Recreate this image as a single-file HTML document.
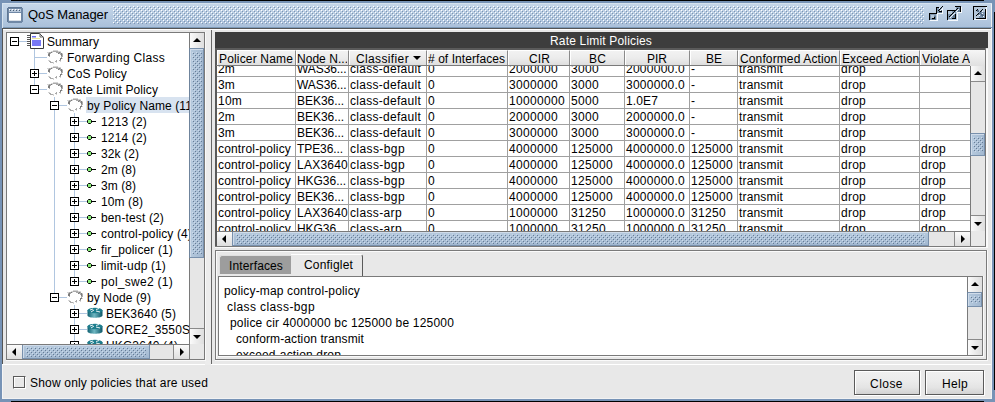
<!DOCTYPE html><html><head><meta charset="utf-8"><style>
html,body{margin:0;padding:0;width:995px;height:402px;overflow:hidden;position:relative;font-family:"Liberation Sans",sans-serif;}
body div{position:absolute;}
.t{white-space:pre;}
</style></head><body><div style="left:0px;top:0px;width:995px;height:402px;background:#7793b6"></div>
<div style="left:11px;top:0px;width:973px;height:1px;background:#000"></div>
<div style="left:994px;top:12px;width:1px;height:378px;background:#000"></div>
<div style="left:11px;top:401px;width:973px;height:1px;background:#000"></div>
<div style="left:2px;top:3px;width:990px;height:396px;background:#f2f2f2"></div>
<div style="left:2px;top:3px;width:990px;height:1px;background:#d6e3ef"></div>
<div style="left:2px;top:3px;width:1px;height:25px;background:#d6e3ef"></div>
<div style="left:3px;top:4px;width:988px;height:23px;background:linear-gradient(#c6d7ea,#b8cce2 50%,#aac0da)"></div>
<div style="left:3px;top:27px;width:989px;height:1px;background:#7d9ab8"></div>
<div style="left:3px;top:28px;width:988px;height:370px;background:#e8e8e8"></div>
<div style="left:2px;top:28px;width:990px;height:1px;background:#555"></div>
<div style="left:2px;top:28px;width:1px;height:336px;background:#555"></div>
<div style="left:3px;top:29px;width:988px;height:1px;background:#fff"></div>
<div style="left:2px;top:364px;width:990px;height:1px;background:#fff"></div>
<div style="left:2px;top:365px;width:1px;height:33px;background:#f4f4f4"></div>
<div style="left:991px;top:28px;width:1px;height:337px;background:#f4f4f4"></div>
<svg style="position:absolute;left:7px;top:7px" width="16" height="16" shape-rendering="crispEdges"><rect x="1" y="0" width="14" height="1" fill="#5f7794"/><rect x="0" y="1" width="1" height="1" fill="#5f7794"/><rect x="1" y="1" width="15" height="1" fill="#7088a6"/><rect x="0" y="2" width="1" height="1" fill="#5f7794"/><rect x="1" y="2" width="1" height="1" fill="#7088a6"/><rect x="2" y="2" width="1" height="1" fill="#ffffff"/><rect x="3" y="2" width="2" height="1" fill="#b9c8da"/><rect x="5" y="2" width="1" height="1" fill="#ffffff"/><rect x="6" y="2" width="2" height="1" fill="#b9c8da"/><rect x="8" y="2" width="1" height="1" fill="#ffffff"/><rect x="9" y="2" width="2" height="1" fill="#b9c8da"/><rect x="11" y="2" width="1" height="1" fill="#ffffff"/><rect x="12" y="2" width="2" height="1" fill="#b9c8da"/><rect x="14" y="2" width="2" height="1" fill="#7088a6"/><rect x="0" y="3" width="1" height="1" fill="#5f7794"/><rect x="1" y="3" width="1" height="1" fill="#7088a6"/><rect x="2" y="3" width="1" height="1" fill="#b9c8da"/><rect x="3" y="3" width="1" height="1" fill="#4a5f78"/><rect x="4" y="3" width="2" height="1" fill="#b9c8da"/><rect x="6" y="3" width="1" height="1" fill="#4a5f78"/><rect x="7" y="3" width="2" height="1" fill="#b9c8da"/><rect x="9" y="3" width="1" height="1" fill="#4a5f78"/><rect x="10" y="3" width="2" height="1" fill="#b9c8da"/><rect x="12" y="3" width="1" height="1" fill="#4a5f78"/><rect x="13" y="3" width="1" height="1" fill="#b9c8da"/><rect x="14" y="3" width="2" height="1" fill="#7088a6"/><rect x="0" y="4" width="1" height="1" fill="#5f7794"/><rect x="1" y="4" width="1" height="1" fill="#7088a6"/><rect x="2" y="4" width="12" height="1" fill="#b9c8da"/><rect x="14" y="4" width="2" height="1" fill="#7088a6"/><rect x="0" y="5" width="1" height="1" fill="#5f7794"/><rect x="1" y="5" width="15" height="1" fill="#7088a6"/><rect x="0" y="6" width="1" height="1" fill="#5f7794"/><rect x="1" y="6" width="1" height="1" fill="#7088a6"/><rect x="2" y="6" width="12" height="1" fill="#ffffff"/><rect x="14" y="6" width="2" height="1" fill="#7088a6"/><rect x="0" y="7" width="1" height="1" fill="#5f7794"/><rect x="1" y="7" width="1" height="1" fill="#7088a6"/><rect x="2" y="7" width="12" height="1" fill="#ffffff"/><rect x="14" y="7" width="2" height="1" fill="#7088a6"/><rect x="0" y="8" width="1" height="1" fill="#5f7794"/><rect x="1" y="8" width="1" height="1" fill="#7088a6"/><rect x="2" y="8" width="12" height="1" fill="#ffffff"/><rect x="14" y="8" width="2" height="1" fill="#7088a6"/><rect x="0" y="9" width="1" height="1" fill="#5f7794"/><rect x="1" y="9" width="1" height="1" fill="#7088a6"/><rect x="2" y="9" width="12" height="1" fill="#ffffff"/><rect x="14" y="9" width="2" height="1" fill="#7088a6"/><rect x="0" y="10" width="1" height="1" fill="#5f7794"/><rect x="1" y="10" width="1" height="1" fill="#7088a6"/><rect x="2" y="10" width="12" height="1" fill="#ffffff"/><rect x="14" y="10" width="2" height="1" fill="#7088a6"/><rect x="0" y="11" width="1" height="1" fill="#5f7794"/><rect x="1" y="11" width="1" height="1" fill="#7088a6"/><rect x="2" y="11" width="12" height="1" fill="#ffffff"/><rect x="14" y="11" width="2" height="1" fill="#7088a6"/><rect x="0" y="12" width="1" height="1" fill="#5f7794"/><rect x="1" y="12" width="1" height="1" fill="#7088a6"/><rect x="2" y="12" width="12" height="1" fill="#ffffff"/><rect x="14" y="12" width="2" height="1" fill="#7088a6"/><rect x="0" y="13" width="1" height="1" fill="#5f7794"/><rect x="1" y="13" width="1" height="1" fill="#7088a6"/><rect x="2" y="13" width="12" height="1" fill="#d8dee6"/><rect x="14" y="13" width="2" height="1" fill="#7088a6"/><rect x="0" y="14" width="1" height="1" fill="#5f7794"/><rect x="1" y="14" width="15" height="1" fill="#7088a6"/><rect x="1" y="15" width="14" height="1" fill="#7088a6"/></svg>
<div class="t" style="left:28px;top:6px;font-size:13px;line-height:17px;letter-spacing:-0.085px;color:#000;">QoS Manager</div>
<svg style="position:absolute;left:113px;top:6px" width="811" height="18"><defs><pattern id="p18" x="0" y="0" width="4" height="4" patternUnits="userSpaceOnUse"><rect x="0" y="0" width="1" height="1" fill="#ffffff"/><rect x="1" y="1" width="1" height="1" fill="#7d95b2"/><rect x="2" y="2" width="1" height="1" fill="#ffffff"/><rect x="3" y="3" width="1" height="1" fill="#7d95b2"/></pattern></defs><rect width="811" height="18" fill="url(#p18)"/></svg>
<svg style="position:absolute;left:927px;top:4px" width="18" height="18" shape-rendering="crispEdges"><rect x="15" y="2" width="1" height="1" fill="#000000"/><rect x="9" y="3" width="3" height="1" fill="#000000"/><rect x="14" y="3" width="1" height="1" fill="#000000"/><rect x="9" y="4" width="1" height="1" fill="#000000"/><rect x="10" y="4" width="2" height="1" fill="#7e96b0"/><rect x="12" y="4" width="1" height="1" fill="#f4f8fc"/><rect x="13" y="4" width="1" height="1" fill="#000000"/><rect x="14" y="4" width="1" height="1" fill="#7e96b0"/><rect x="15" y="4" width="1" height="1" fill="#f4f8fc"/><rect x="9" y="5" width="1" height="1" fill="#000000"/><rect x="10" y="5" width="2" height="1" fill="#7e96b0"/><rect x="12" y="5" width="1" height="1" fill="#000000"/><rect x="13" y="5" width="1" height="1" fill="#7e96b0"/><rect x="14" y="5" width="2" height="1" fill="#f4f8fc"/><rect x="9" y="6" width="1" height="1" fill="#000000"/><rect x="10" y="6" width="1" height="1" fill="#7e96b0"/><rect x="11" y="6" width="1" height="1" fill="#000000"/><rect x="12" y="6" width="1" height="1" fill="#5f7790"/><rect x="13" y="6" width="1" height="1" fill="#f4f8fc"/><rect x="14" y="6" width="1" height="1" fill="#5f7790"/><rect x="15" y="6" width="1" height="1" fill="#f4f8fc"/><rect x="9" y="7" width="1" height="1" fill="#000000"/><rect x="10" y="7" width="2" height="1" fill="#7e96b0"/><rect x="12" y="7" width="3" height="1" fill="#000000"/><rect x="15" y="7" width="1" height="1" fill="#f4f8fc"/><rect x="9" y="8" width="1" height="1" fill="#000000"/><rect x="10" y="8" width="2" height="1" fill="#7e96b0"/><rect x="12" y="8" width="3" height="1" fill="#5f7790"/><rect x="15" y="8" width="1" height="1" fill="#f4f8fc"/><rect x="2" y="9" width="8" height="1" fill="#000000"/><rect x="10" y="9" width="6" height="1" fill="#f4f8fc"/><rect x="2" y="10" width="1" height="1" fill="#000000"/><rect x="3" y="10" width="6" height="1" fill="#7e96b0"/><rect x="10" y="10" width="1" height="1" fill="#f4f8fc"/><rect x="2" y="11" width="1" height="1" fill="#000000"/><rect x="3" y="11" width="1" height="1" fill="#7e96b0"/><rect x="4" y="11" width="3" height="1" fill="#b4c6d8"/><rect x="7" y="11" width="2" height="1" fill="#7e96b0"/><rect x="10" y="11" width="1" height="1" fill="#f4f8fc"/><rect x="2" y="12" width="1" height="1" fill="#000000"/><rect x="3" y="12" width="1" height="1" fill="#7e96b0"/><rect x="4" y="12" width="3" height="1" fill="#b4c6d8"/><rect x="7" y="12" width="2" height="1" fill="#5f7790"/><rect x="10" y="12" width="1" height="1" fill="#f4f8fc"/><rect x="2" y="13" width="1" height="1" fill="#000000"/><rect x="3" y="13" width="1" height="1" fill="#7e96b0"/><rect x="4" y="13" width="3" height="1" fill="#b4c6d8"/><rect x="7" y="13" width="1" height="1" fill="#000000"/><rect x="8" y="13" width="1" height="1" fill="#5f7790"/><rect x="10" y="13" width="1" height="1" fill="#f4f8fc"/><rect x="2" y="14" width="1" height="1" fill="#000000"/><rect x="3" y="14" width="2" height="1" fill="#7e96b0"/><rect x="5" y="14" width="3" height="1" fill="#000000"/><rect x="8" y="14" width="1" height="1" fill="#5f7790"/><rect x="10" y="14" width="1" height="1" fill="#f4f8fc"/><rect x="2" y="15" width="1" height="1" fill="#000000"/><rect x="3" y="15" width="2" height="1" fill="#7e96b0"/><rect x="5" y="15" width="4" height="1" fill="#5f7790"/><rect x="10" y="15" width="1" height="1" fill="#f4f8fc"/><rect x="3" y="16" width="8" height="1" fill="#f4f8fc"/></svg>
<svg style="position:absolute;left:945px;top:4px" width="18" height="18" shape-rendering="crispEdges"><rect x="10" y="2" width="6" height="1" fill="#000000"/><rect x="11" y="3" width="4" height="1" fill="#7e96b0"/><rect x="15" y="3" width="1" height="1" fill="#000000"/><rect x="16" y="3" width="1" height="1" fill="#f4f8fc"/><rect x="11" y="4" width="1" height="1" fill="#7e96b0"/><rect x="12" y="4" width="1" height="1" fill="#000000"/><rect x="13" y="4" width="2" height="1" fill="#5f7790"/><rect x="15" y="4" width="1" height="1" fill="#000000"/><rect x="16" y="4" width="1" height="1" fill="#f4f8fc"/><rect x="11" y="5" width="1" height="1" fill="#000000"/><rect x="12" y="5" width="1" height="1" fill="#7e96b0"/><rect x="13" y="5" width="1" height="1" fill="#f4f8fc"/><rect x="14" y="5" width="1" height="1" fill="#5f7790"/><rect x="15" y="5" width="1" height="1" fill="#000000"/><rect x="16" y="5" width="1" height="1" fill="#f4f8fc"/><rect x="2" y="6" width="9" height="1" fill="#000000"/><rect x="11" y="6" width="1" height="1" fill="#7e96b0"/><rect x="12" y="6" width="1" height="1" fill="#f4f8fc"/><rect x="13" y="6" width="2" height="1" fill="#5f7790"/><rect x="15" y="6" width="1" height="1" fill="#000000"/><rect x="16" y="6" width="1" height="1" fill="#f4f8fc"/><rect x="2" y="7" width="1" height="1" fill="#000000"/><rect x="3" y="7" width="4" height="1" fill="#b4c6d8"/><rect x="7" y="7" width="2" height="1" fill="#7e96b0"/><rect x="9" y="7" width="1" height="1" fill="#000000"/><rect x="10" y="7" width="1" height="1" fill="#7e96b0"/><rect x="11" y="7" width="1" height="1" fill="#f4f8fc"/><rect x="12" y="7" width="1" height="1" fill="#7e96b0"/><rect x="13" y="7" width="2" height="1" fill="#5f7790"/><rect x="15" y="7" width="1" height="1" fill="#000000"/><rect x="16" y="7" width="1" height="1" fill="#f4f8fc"/><rect x="2" y="8" width="1" height="1" fill="#000000"/><rect x="3" y="8" width="4" height="1" fill="#b4c6d8"/><rect x="7" y="8" width="1" height="1" fill="#7e96b0"/><rect x="8" y="8" width="1" height="1" fill="#000000"/><rect x="9" y="8" width="2" height="1" fill="#7e96b0"/><rect x="12" y="8" width="5" height="1" fill="#f4f8fc"/><rect x="2" y="9" width="1" height="1" fill="#000000"/><rect x="3" y="9" width="4" height="1" fill="#b4c6d8"/><rect x="7" y="9" width="1" height="1" fill="#000000"/><rect x="8" y="9" width="1" height="1" fill="#7e96b0"/><rect x="9" y="9" width="1" height="1" fill="#f4f8fc"/><rect x="10" y="9" width="1" height="1" fill="#7e96b0"/><rect x="12" y="9" width="1" height="1" fill="#f4f8fc"/><rect x="2" y="10" width="1" height="1" fill="#000000"/><rect x="3" y="10" width="3" height="1" fill="#7e96b0"/><rect x="6" y="10" width="1" height="1" fill="#000000"/><rect x="7" y="10" width="1" height="1" fill="#7e96b0"/><rect x="8" y="10" width="1" height="1" fill="#f4f8fc"/><rect x="9" y="10" width="1" height="1" fill="#7e96b0"/><rect x="10" y="10" width="1" height="1" fill="#000000"/><rect x="12" y="10" width="1" height="1" fill="#f4f8fc"/><rect x="2" y="11" width="1" height="1" fill="#000000"/><rect x="3" y="11" width="2" height="1" fill="#7e96b0"/><rect x="5" y="11" width="1" height="1" fill="#000000"/><rect x="6" y="11" width="1" height="1" fill="#7e96b0"/><rect x="7" y="11" width="1" height="1" fill="#f4f8fc"/><rect x="8" y="11" width="2" height="1" fill="#5f7790"/><rect x="10" y="11" width="1" height="1" fill="#000000"/><rect x="12" y="11" width="1" height="1" fill="#f4f8fc"/><rect x="2" y="12" width="1" height="1" fill="#000000"/><rect x="3" y="12" width="1" height="1" fill="#7e96b0"/><rect x="4" y="12" width="1" height="1" fill="#000000"/><rect x="5" y="12" width="1" height="1" fill="#7e96b0"/><rect x="6" y="12" width="1" height="1" fill="#f4f8fc"/><rect x="7" y="12" width="1" height="1" fill="#7e96b0"/><rect x="8" y="12" width="2" height="1" fill="#5f7790"/><rect x="10" y="12" width="1" height="1" fill="#000000"/><rect x="12" y="12" width="1" height="1" fill="#f4f8fc"/><rect x="2" y="13" width="1" height="1" fill="#000000"/><rect x="3" y="13" width="2" height="1" fill="#7e96b0"/><rect x="5" y="13" width="1" height="1" fill="#f4f8fc"/><rect x="6" y="13" width="2" height="1" fill="#7e96b0"/><rect x="8" y="13" width="2" height="1" fill="#5f7790"/><rect x="10" y="13" width="1" height="1" fill="#000000"/><rect x="12" y="13" width="1" height="1" fill="#f4f8fc"/><rect x="2" y="14" width="1" height="1" fill="#000000"/><rect x="3" y="14" width="4" height="1" fill="#7e96b0"/><rect x="7" y="14" width="4" height="1" fill="#000000"/><rect x="12" y="14" width="1" height="1" fill="#f4f8fc"/><rect x="2" y="15" width="1" height="1" fill="#000000"/><rect x="12" y="15" width="1" height="1" fill="#f4f8fc"/><rect x="3" y="16" width="10" height="1" fill="#f4f8fc"/></svg>
<svg style="position:absolute;left:971px;top:4px" width="18" height="18" shape-rendering="crispEdges"><rect x="2" y="2" width="14" height="1" fill="#000000"/><rect x="2" y="3" width="1" height="1" fill="#000000"/><rect x="3" y="3" width="11" height="1" fill="#b4c6d8"/><rect x="15" y="3" width="1" height="1" fill="#f4f8fc"/><rect x="2" y="4" width="1" height="1" fill="#000000"/><rect x="3" y="4" width="11" height="1" fill="#b4c6d8"/><rect x="15" y="4" width="1" height="1" fill="#f4f8fc"/><rect x="2" y="5" width="1" height="1" fill="#000000"/><rect x="3" y="5" width="3" height="1" fill="#b4c6d8"/><rect x="6" y="5" width="1" height="1" fill="#000000"/><rect x="7" y="5" width="4" height="1" fill="#b4c6d8"/><rect x="11" y="5" width="1" height="1" fill="#000000"/><rect x="12" y="5" width="2" height="1" fill="#b4c6d8"/><rect x="14" y="5" width="1" height="1" fill="#000000"/><rect x="15" y="5" width="1" height="1" fill="#f4f8fc"/><rect x="2" y="6" width="1" height="1" fill="#000000"/><rect x="3" y="6" width="2" height="1" fill="#b4c6d8"/><rect x="5" y="6" width="1" height="1" fill="#000000"/><rect x="6" y="6" width="1" height="1" fill="#4f6580"/><rect x="7" y="6" width="1" height="1" fill="#5f7790"/><rect x="8" y="6" width="2" height="1" fill="#b4c6d8"/><rect x="10" y="6" width="1" height="1" fill="#000000"/><rect x="11" y="6" width="3" height="1" fill="#b4c6d8"/><rect x="14" y="6" width="1" height="1" fill="#000000"/><rect x="15" y="6" width="1" height="1" fill="#f4f8fc"/><rect x="2" y="7" width="1" height="1" fill="#000000"/><rect x="3" y="7" width="3" height="1" fill="#b4c6d8"/><rect x="6" y="7" width="1" height="1" fill="#5f7790"/><rect x="7" y="7" width="1" height="1" fill="#4f6580"/><rect x="8" y="7" width="1" height="1" fill="#b4c6d8"/><rect x="9" y="7" width="1" height="1" fill="#000000"/><rect x="10" y="7" width="1" height="1" fill="#5f7790"/><rect x="11" y="7" width="1" height="1" fill="#f4f8fc"/><rect x="12" y="7" width="2" height="1" fill="#b4c6d8"/><rect x="14" y="7" width="1" height="1" fill="#000000"/><rect x="15" y="7" width="1" height="1" fill="#f4f8fc"/><rect x="2" y="8" width="1" height="1" fill="#000000"/><rect x="3" y="8" width="5" height="1" fill="#b4c6d8"/><rect x="8" y="8" width="1" height="1" fill="#4f6580"/><rect x="9" y="8" width="1" height="1" fill="#5f7790"/><rect x="10" y="8" width="4" height="1" fill="#7e96b0"/><rect x="14" y="8" width="1" height="1" fill="#000000"/><rect x="15" y="8" width="1" height="1" fill="#f4f8fc"/><rect x="2" y="9" width="1" height="1" fill="#000000"/><rect x="3" y="9" width="4" height="1" fill="#b4c6d8"/><rect x="7" y="9" width="1" height="1" fill="#000000"/><rect x="8" y="9" width="1" height="1" fill="#5f7790"/><rect x="9" y="9" width="1" height="1" fill="#4f6580"/><rect x="10" y="9" width="1" height="1" fill="#7e96b0"/><rect x="11" y="9" width="1" height="1" fill="#f4f8fc"/><rect x="12" y="9" width="2" height="1" fill="#7e96b0"/><rect x="14" y="9" width="1" height="1" fill="#000000"/><rect x="15" y="9" width="1" height="1" fill="#f4f8fc"/><rect x="2" y="10" width="1" height="1" fill="#000000"/><rect x="3" y="10" width="3" height="1" fill="#b4c6d8"/><rect x="6" y="10" width="1" height="1" fill="#000000"/><rect x="7" y="10" width="1" height="1" fill="#5f7790"/><rect x="8" y="10" width="2" height="1" fill="#7e96b0"/><rect x="10" y="10" width="1" height="1" fill="#4f6580"/><rect x="11" y="10" width="1" height="1" fill="#5f7790"/><rect x="12" y="10" width="2" height="1" fill="#7e96b0"/><rect x="14" y="10" width="1" height="1" fill="#000000"/><rect x="15" y="10" width="1" height="1" fill="#f4f8fc"/><rect x="2" y="11" width="1" height="1" fill="#000000"/><rect x="3" y="11" width="2" height="1" fill="#b4c6d8"/><rect x="5" y="11" width="1" height="1" fill="#000000"/><rect x="6" y="11" width="2" height="1" fill="#b4c6d8"/><rect x="8" y="11" width="1" height="1" fill="#f4f8fc"/><rect x="9" y="11" width="1" height="1" fill="#7e96b0"/><rect x="10" y="11" width="1" height="1" fill="#5f7790"/><rect x="11" y="11" width="1" height="1" fill="#4f6580"/><rect x="12" y="11" width="1" height="1" fill="#5f7790"/><rect x="13" y="11" width="1" height="1" fill="#7e96b0"/><rect x="14" y="11" width="1" height="1" fill="#000000"/><rect x="15" y="11" width="1" height="1" fill="#f4f8fc"/><rect x="2" y="12" width="1" height="1" fill="#000000"/><rect x="3" y="12" width="5" height="1" fill="#b4c6d8"/><rect x="8" y="12" width="3" height="1" fill="#7e96b0"/><rect x="11" y="12" width="1" height="1" fill="#5f7790"/><rect x="12" y="12" width="1" height="1" fill="#f4f8fc"/><rect x="13" y="12" width="1" height="1" fill="#7e96b0"/><rect x="14" y="12" width="1" height="1" fill="#000000"/><rect x="15" y="12" width="1" height="1" fill="#f4f8fc"/><rect x="2" y="13" width="1" height="1" fill="#000000"/><rect x="3" y="13" width="5" height="1" fill="#b4c6d8"/><rect x="8" y="13" width="6" height="1" fill="#7e96b0"/><rect x="14" y="13" width="1" height="1" fill="#000000"/><rect x="15" y="13" width="1" height="1" fill="#f4f8fc"/><rect x="2" y="14" width="1" height="1" fill="#000000"/><rect x="5" y="14" width="10" height="1" fill="#000000"/><rect x="15" y="14" width="1" height="1" fill="#f4f8fc"/><rect x="2" y="15" width="1" height="1" fill="#000000"/><rect x="3" y="15" width="13" height="1" fill="#f4f8fc"/></svg>
<div style="left:205px;top:30px;width:6px;height:335px;background:#ececec"></div>
<div style="left:211px;top:30px;width:1px;height:334px;background:#666"></div>
<div style="left:6px;top:32px;width:199px;height:328px;background:#7a7a7a"></div>
<div style="left:7px;top:33px;width:197px;height:326px;background:#ffffff"></div>
<div style="left:189px;top:33px;width:1px;height:311px;background:#7a7a7a"></div>
<div style="left:190px;top:33px;width:14px;height:311px;background:#e6e6e6"></div>
<div style="left:190px;top:33px;width:14px;height:15px;background:linear-gradient(90deg,#fbfbfb 0%,#f0f0f0 35%,#dedede 100%)"></div>
<div style="left:190px;top:48px;width:14px;height:1px;background:#8a8a8a"></div>
<svg style="position:absolute;left:193px;top:37px" width="8" height="8"><polygon points="0,5 8,5 4,1" fill="#000"/></svg>
<div style="left:190px;top:329px;width:14px;height:15px;background:linear-gradient(90deg,#fbfbfb 0%,#f0f0f0 35%,#dedede 100%)"></div>
<div style="left:190px;top:328px;width:14px;height:1px;background:#8a8a8a"></div>
<svg style="position:absolute;left:193px;top:334px" width="8" height="8"><polygon points="0,1 8,1 4,5" fill="#000"/></svg>
<div style="left:189px;top:48px;width:1px;height:210px;background:#6f849c"></div>
<div style="left:190px;top:48px;width:14px;height:210px;background:linear-gradient(90deg,#b6cade,#a2b8d0);box-sizing:border-box;border:1px solid #7890ac;border-left:none;box-shadow:inset 1px 1px 0 #d0dcea"></div>
<svg style="position:absolute;left:192px;top:52px" width="10" height="202"><defs><pattern id="p36" x="0" y="0" width="4" height="4" patternUnits="userSpaceOnUse"><rect x="0" y="0" width="1" height="1" fill="#ccdaea"/><rect x="1" y="1" width="1" height="1" fill="#667c96"/><rect x="2" y="2" width="1" height="1" fill="#ccdaea"/><rect x="3" y="3" width="1" height="1" fill="#667c96"/></pattern></defs><rect width="10" height="202" fill="url(#p36)"/></svg>
<div style="left:7px;top:344px;width:182px;height:1px;background:#7a7a7a"></div>
<div style="left:7px;top:345px;width:182px;height:14px;background:#e6e6e6"></div>
<div style="left:7px;top:345px;width:15px;height:14px;background:linear-gradient(#fbfbfb 0%,#f0f0f0 35%,#dedede 100%)"></div>
<svg style="position:absolute;left:11px;top:348px" width="8" height="8"><polygon points="5,0 5,8 1,4" fill="#000"/></svg>
<div style="left:173px;top:345px;width:1px;height:14px;background:#8a8a8a"></div>
<div style="left:174px;top:345px;width:15px;height:14px;background:linear-gradient(#fbfbfb 0%,#f0f0f0 35%,#dedede 100%)"></div>
<svg style="position:absolute;left:179px;top:348px" width="8" height="8"><polygon points="1,0 1,8 5,4" fill="#000"/></svg>
<div style="left:22px;top:345px;width:128px;height:14px;background:linear-gradient(#b6cade,#a2b8d0);box-sizing:border-box;border:1px solid #7890ac;border-top:none;box-shadow:inset 1px 1px 0 #d0dcea"></div>
<svg style="position:absolute;left:26px;top:347px" width="120" height="10"><defs><pattern id="p45" x="0" y="0" width="4" height="4" patternUnits="userSpaceOnUse"><rect x="0" y="0" width="1" height="1" fill="#ccdaea"/><rect x="1" y="1" width="1" height="1" fill="#667c96"/><rect x="2" y="2" width="1" height="1" fill="#ccdaea"/><rect x="3" y="3" width="1" height="1" fill="#667c96"/></pattern></defs><rect width="120" height="10" fill="url(#p45)"/></svg>
<div style="left:189px;top:344px;width:15px;height:15px;background:#e8e8e8"></div>
<div style="left:189px;top:344px;width:1px;height:15px;background:#7a7a7a"></div>
<div style="left:7px;top:33px;width:182px;height:311px;overflow:hidden">
<div style="left:27px;top:16px;width:1px;height:41px;background:#b0c6e0"></div>
<div style="left:47px;top:64px;width:1px;height:201px;background:#b0c6e0"></div>
<div style="left:67px;top:80px;width:1px;height:173px;background:#b0c6e0"></div>
<div style="left:67px;top:272px;width:1px;height:39px;background:#b0c6e0"></div>
<div style="left:11px;top:8px;width:9px;height:1px;background:#b0c6e0"></div>
<div class="t" style="left:40px;top:1px;font-size:12px;line-height:16px;letter-spacing:0.094px;color:#000;">Summary</div>
<div style="left:27px;top:24px;width:13px;height:1px;background:#b0c6e0"></div>
<div class="t" style="left:60px;top:17px;font-size:12px;line-height:16px;letter-spacing:0.290px;color:#000;">Forwarding Class</div>
<div style="left:27px;top:40px;width:13px;height:1px;background:#b0c6e0"></div>
<div class="t" style="left:60px;top:33px;font-size:12px;line-height:16px;letter-spacing:0.131px;color:#000;">CoS Policy</div>
<div style="left:27px;top:56px;width:13px;height:1px;background:#b0c6e0"></div>
<div class="t" style="left:60px;top:49px;font-size:12px;line-height:16px;letter-spacing:0.096px;color:#000;">Rate Limit Policy</div>
<div style="left:47px;top:72px;width:13px;height:1px;background:#b0c6e0"></div>
<div style="left:79px;top:64px;width:200px;height:16px;background:#d8e3f0"></div>
<div class="t" style="left:80px;top:65px;font-size:12px;line-height:16px;letter-spacing:0.103px;color:#000;">by Policy Name (11)</div>
<div style="left:67px;top:88px;width:13px;height:1px;background:#b0c6e0"></div>
<div class="t" style="left:94px;top:81px;font-size:12px;line-height:16px;letter-spacing:0.163px;color:#000;">1213 (2)</div>
<div style="left:67px;top:104px;width:13px;height:1px;background:#b0c6e0"></div>
<div class="t" style="left:94px;top:97px;font-size:12px;line-height:16px;letter-spacing:0.163px;color:#000;">1214 (2)</div>
<div style="left:67px;top:120px;width:13px;height:1px;background:#b0c6e0"></div>
<div class="t" style="left:94px;top:113px;font-size:12px;line-height:16px;letter-spacing:0.093px;color:#000;">32k (2)</div>
<div style="left:67px;top:136px;width:13px;height:1px;background:#b0c6e0"></div>
<div class="t" style="left:94px;top:129px;font-size:12px;line-height:16px;letter-spacing:0.055px;color:#000;">2m (8)</div>
<div style="left:67px;top:152px;width:13px;height:1px;background:#b0c6e0"></div>
<div class="t" style="left:94px;top:145px;font-size:12px;line-height:16px;letter-spacing:0.055px;color:#000;">3m (8)</div>
<div style="left:67px;top:168px;width:13px;height:1px;background:#b0c6e0"></div>
<div class="t" style="left:94px;top:161px;font-size:12px;line-height:16px;letter-spacing:0.094px;color:#000;">10m (8)</div>
<div style="left:67px;top:184px;width:13px;height:1px;background:#b0c6e0"></div>
<div class="t" style="left:94px;top:177px;font-size:12px;line-height:16px;letter-spacing:0.137px;color:#000;">ben-test (2)</div>
<div style="left:67px;top:200px;width:13px;height:1px;background:#b0c6e0"></div>
<div class="t" style="left:94px;top:193px;font-size:12px;line-height:16px;letter-spacing:0.128px;color:#000;">control-policy (4)</div>
<div style="left:67px;top:216px;width:13px;height:1px;background:#b0c6e0"></div>
<div class="t" style="left:94px;top:209px;font-size:12px;line-height:16px;letter-spacing:0.132px;color:#000;">fir_policer (1)</div>
<div style="left:67px;top:232px;width:13px;height:1px;background:#b0c6e0"></div>
<div class="t" style="left:94px;top:225px;font-size:12px;line-height:16px;letter-spacing:0.127px;color:#000;">limit-udp (1)</div>
<div style="left:67px;top:248px;width:13px;height:1px;background:#b0c6e0"></div>
<div class="t" style="left:94px;top:241px;font-size:12px;line-height:16px;letter-spacing:0.275px;color:#000;">pol_swe2 (1)</div>
<div style="left:47px;top:264px;width:13px;height:1px;background:#b0c6e0"></div>
<div class="t" style="left:80px;top:257px;font-size:12px;line-height:16px;letter-spacing:0.119px;color:#000;">by Node (9)</div>
<div style="left:67px;top:280px;width:13px;height:1px;background:#b0c6e0"></div>
<div class="t" style="left:99px;top:273px;font-size:12px;line-height:16px;letter-spacing:0.118px;color:#000;">BEK3640 (5)</div>
<div style="left:67px;top:296px;width:13px;height:1px;background:#b0c6e0"></div>
<div class="t" style="left:99px;top:289px;font-size:12px;line-height:16px;letter-spacing:0.122px;color:#000;">CORE2_3550SW (3)</div>
<div style="left:67px;top:312px;width:13px;height:1px;background:#b0c6e0"></div>
<div class="t" style="left:99px;top:305px;font-size:12px;line-height:16px;letter-spacing:0.118px;color:#000;">HKG3640 (4)</div>
<svg style="position:absolute;left:20px;top:0px" width="17" height="16"><path d="M3.5 0.5 H12.5 L16.5 4.5 V15.5 H3.5 Z" fill="#fff" stroke="#3a3a3a"/><path d="M13 0.5 V4 H16.5" fill="none" stroke="#666"/><rect x="5" y="3" width="4" height="1.5" fill="#6a6cf0"/><rect x="5" y="5" width="8" height="0.8" fill="#e8e080"/><rect x="5" y="7" width="9" height="6" fill="#7878f4"/><path d="M0 2.5 H3 M0 4.5 H3 M0 6.5 H3 M0 8.5 H3 M0 10.5 H3 M0 12.5 H3" stroke="#555" stroke-width="1"/></svg>
<svg style="position:absolute;left:3px;top:4px" width="9" height="9"><rect x="0.5" y="0.5" width="8" height="8" fill="#fff" stroke="#000"/><rect x="2" y="4" width="5" height="1" fill="#000"/></svg>
<svg style="position:absolute;left:39px;top:16px" width="18" height="16" shape-rendering="crispEdges"><rect x="7" y="1" width="5" height="1" fill="#d4d4d4"/><rect x="5" y="2" width="2" height="1" fill="#d4d4d4"/><rect x="7" y="2" width="5" height="1" fill="#aaaaaa"/><rect x="12" y="2" width="3" height="1" fill="#d4d4d4"/><rect x="1" y="3" width="2" height="1" fill="#d4d4d4"/><rect x="3" y="3" width="2" height="1" fill="#aaaaaa"/><rect x="5" y="3" width="1" height="1" fill="#7c7c7c"/><rect x="6" y="3" width="1" height="1" fill="#d4d4d4"/><rect x="10" y="3" width="3" height="1" fill="#aaaaaa"/><rect x="13" y="3" width="1" height="1" fill="#7c7c7c"/><rect x="14" y="3" width="1" height="1" fill="#aaaaaa"/><rect x="2" y="4" width="1" height="1" fill="#aaaaaa"/><rect x="3" y="4" width="1" height="1" fill="#7c7c7c"/><rect x="4" y="4" width="1" height="1" fill="#aaaaaa"/><rect x="12" y="4" width="1" height="1" fill="#7c7c7c"/><rect x="13" y="4" width="2" height="1" fill="#aaaaaa"/><rect x="15" y="4" width="1" height="1" fill="#7c7c7c"/><rect x="16" y="4" width="1" height="1" fill="#d4d4d4"/><rect x="2" y="5" width="2" height="1" fill="#7c7c7c"/><rect x="14" y="5" width="1" height="1" fill="#aaaaaa"/><rect x="15" y="5" width="1" height="1" fill="#7c7c7c"/><rect x="16" y="5" width="1" height="1" fill="#aaaaaa"/><rect x="2" y="6" width="2" height="1" fill="#7c7c7c"/><rect x="15" y="6" width="1" height="1" fill="#7c7c7c"/><rect x="16" y="6" width="1" height="1" fill="#aaaaaa"/><rect x="3" y="7" width="1" height="1" fill="#aaaaaa"/><rect x="15" y="7" width="2" height="1" fill="#aaaaaa"/><rect x="15" y="8" width="1" height="1" fill="#aaaaaa"/><rect x="14" y="9" width="2" height="1" fill="#7c7c7c"/><rect x="16" y="9" width="1" height="1" fill="#d4d4d4"/><rect x="14" y="10" width="1" height="1" fill="#7c7c7c"/><rect x="2" y="11" width="2" height="1" fill="#d4d4d4"/><rect x="10" y="11" width="1" height="1" fill="#aaaaaa"/><rect x="13" y="11" width="2" height="1" fill="#aaaaaa"/><rect x="3" y="12" width="2" height="1" fill="#aaaaaa"/><rect x="9" y="12" width="2" height="1" fill="#aaaaaa"/><rect x="14" y="12" width="1" height="1" fill="#d4d4d4"/><rect x="4" y="13" width="3" height="1" fill="#aaaaaa"/><rect x="7" y="13" width="1" height="1" fill="#d4d4d4"/><rect x="10" y="13" width="1" height="1" fill="#d4d4d4"/><rect x="7" y="14" width="1" height="1" fill="#d4d4d4"/></svg>
<svg style="position:absolute;left:39px;top:32px" width="18" height="16" shape-rendering="crispEdges"><rect x="7" y="1" width="5" height="1" fill="#d4d4d4"/><rect x="5" y="2" width="2" height="1" fill="#d4d4d4"/><rect x="7" y="2" width="5" height="1" fill="#aaaaaa"/><rect x="12" y="2" width="3" height="1" fill="#d4d4d4"/><rect x="1" y="3" width="2" height="1" fill="#d4d4d4"/><rect x="3" y="3" width="2" height="1" fill="#aaaaaa"/><rect x="5" y="3" width="1" height="1" fill="#7c7c7c"/><rect x="6" y="3" width="1" height="1" fill="#d4d4d4"/><rect x="10" y="3" width="3" height="1" fill="#aaaaaa"/><rect x="13" y="3" width="1" height="1" fill="#7c7c7c"/><rect x="14" y="3" width="1" height="1" fill="#aaaaaa"/><rect x="2" y="4" width="1" height="1" fill="#aaaaaa"/><rect x="3" y="4" width="1" height="1" fill="#7c7c7c"/><rect x="4" y="4" width="1" height="1" fill="#aaaaaa"/><rect x="12" y="4" width="1" height="1" fill="#7c7c7c"/><rect x="13" y="4" width="2" height="1" fill="#aaaaaa"/><rect x="15" y="4" width="1" height="1" fill="#7c7c7c"/><rect x="16" y="4" width="1" height="1" fill="#d4d4d4"/><rect x="2" y="5" width="2" height="1" fill="#7c7c7c"/><rect x="14" y="5" width="1" height="1" fill="#aaaaaa"/><rect x="15" y="5" width="1" height="1" fill="#7c7c7c"/><rect x="16" y="5" width="1" height="1" fill="#aaaaaa"/><rect x="2" y="6" width="2" height="1" fill="#7c7c7c"/><rect x="15" y="6" width="1" height="1" fill="#7c7c7c"/><rect x="16" y="6" width="1" height="1" fill="#aaaaaa"/><rect x="3" y="7" width="1" height="1" fill="#aaaaaa"/><rect x="15" y="7" width="2" height="1" fill="#aaaaaa"/><rect x="15" y="8" width="1" height="1" fill="#aaaaaa"/><rect x="14" y="9" width="2" height="1" fill="#7c7c7c"/><rect x="16" y="9" width="1" height="1" fill="#d4d4d4"/><rect x="14" y="10" width="1" height="1" fill="#7c7c7c"/><rect x="2" y="11" width="2" height="1" fill="#d4d4d4"/><rect x="10" y="11" width="1" height="1" fill="#aaaaaa"/><rect x="13" y="11" width="2" height="1" fill="#aaaaaa"/><rect x="3" y="12" width="2" height="1" fill="#aaaaaa"/><rect x="9" y="12" width="2" height="1" fill="#aaaaaa"/><rect x="14" y="12" width="1" height="1" fill="#d4d4d4"/><rect x="4" y="13" width="3" height="1" fill="#aaaaaa"/><rect x="7" y="13" width="1" height="1" fill="#d4d4d4"/><rect x="10" y="13" width="1" height="1" fill="#d4d4d4"/><rect x="7" y="14" width="1" height="1" fill="#d4d4d4"/></svg>
<svg style="position:absolute;left:23px;top:36px" width="9" height="9"><rect x="0.5" y="0.5" width="8" height="8" fill="#fff" stroke="#000"/><rect x="2" y="4" width="5" height="1" fill="#000"/><rect x="4" y="2" width="1" height="5" fill="#000"/></svg>
<svg style="position:absolute;left:39px;top:48px" width="18" height="16" shape-rendering="crispEdges"><rect x="7" y="1" width="5" height="1" fill="#d4d4d4"/><rect x="5" y="2" width="2" height="1" fill="#d4d4d4"/><rect x="7" y="2" width="5" height="1" fill="#aaaaaa"/><rect x="12" y="2" width="3" height="1" fill="#d4d4d4"/><rect x="1" y="3" width="2" height="1" fill="#d4d4d4"/><rect x="3" y="3" width="2" height="1" fill="#aaaaaa"/><rect x="5" y="3" width="1" height="1" fill="#7c7c7c"/><rect x="6" y="3" width="1" height="1" fill="#d4d4d4"/><rect x="10" y="3" width="3" height="1" fill="#aaaaaa"/><rect x="13" y="3" width="1" height="1" fill="#7c7c7c"/><rect x="14" y="3" width="1" height="1" fill="#aaaaaa"/><rect x="2" y="4" width="1" height="1" fill="#aaaaaa"/><rect x="3" y="4" width="1" height="1" fill="#7c7c7c"/><rect x="4" y="4" width="1" height="1" fill="#aaaaaa"/><rect x="12" y="4" width="1" height="1" fill="#7c7c7c"/><rect x="13" y="4" width="2" height="1" fill="#aaaaaa"/><rect x="15" y="4" width="1" height="1" fill="#7c7c7c"/><rect x="16" y="4" width="1" height="1" fill="#d4d4d4"/><rect x="2" y="5" width="2" height="1" fill="#7c7c7c"/><rect x="14" y="5" width="1" height="1" fill="#aaaaaa"/><rect x="15" y="5" width="1" height="1" fill="#7c7c7c"/><rect x="16" y="5" width="1" height="1" fill="#aaaaaa"/><rect x="2" y="6" width="2" height="1" fill="#7c7c7c"/><rect x="15" y="6" width="1" height="1" fill="#7c7c7c"/><rect x="16" y="6" width="1" height="1" fill="#aaaaaa"/><rect x="3" y="7" width="1" height="1" fill="#aaaaaa"/><rect x="15" y="7" width="2" height="1" fill="#aaaaaa"/><rect x="15" y="8" width="1" height="1" fill="#aaaaaa"/><rect x="14" y="9" width="2" height="1" fill="#7c7c7c"/><rect x="16" y="9" width="1" height="1" fill="#d4d4d4"/><rect x="14" y="10" width="1" height="1" fill="#7c7c7c"/><rect x="2" y="11" width="2" height="1" fill="#d4d4d4"/><rect x="10" y="11" width="1" height="1" fill="#aaaaaa"/><rect x="13" y="11" width="2" height="1" fill="#aaaaaa"/><rect x="3" y="12" width="2" height="1" fill="#aaaaaa"/><rect x="9" y="12" width="2" height="1" fill="#aaaaaa"/><rect x="14" y="12" width="1" height="1" fill="#d4d4d4"/><rect x="4" y="13" width="3" height="1" fill="#aaaaaa"/><rect x="7" y="13" width="1" height="1" fill="#d4d4d4"/><rect x="10" y="13" width="1" height="1" fill="#d4d4d4"/><rect x="7" y="14" width="1" height="1" fill="#d4d4d4"/></svg>
<svg style="position:absolute;left:23px;top:52px" width="9" height="9"><rect x="0.5" y="0.5" width="8" height="8" fill="#fff" stroke="#000"/><rect x="2" y="4" width="5" height="1" fill="#000"/></svg>
<svg style="position:absolute;left:59px;top:64px" width="18" height="16" shape-rendering="crispEdges"><rect x="7" y="1" width="5" height="1" fill="#d4d4d4"/><rect x="5" y="2" width="2" height="1" fill="#d4d4d4"/><rect x="7" y="2" width="5" height="1" fill="#aaaaaa"/><rect x="12" y="2" width="3" height="1" fill="#d4d4d4"/><rect x="1" y="3" width="2" height="1" fill="#d4d4d4"/><rect x="3" y="3" width="2" height="1" fill="#aaaaaa"/><rect x="5" y="3" width="1" height="1" fill="#7c7c7c"/><rect x="6" y="3" width="1" height="1" fill="#d4d4d4"/><rect x="10" y="3" width="3" height="1" fill="#aaaaaa"/><rect x="13" y="3" width="1" height="1" fill="#7c7c7c"/><rect x="14" y="3" width="1" height="1" fill="#aaaaaa"/><rect x="2" y="4" width="1" height="1" fill="#aaaaaa"/><rect x="3" y="4" width="1" height="1" fill="#7c7c7c"/><rect x="4" y="4" width="1" height="1" fill="#aaaaaa"/><rect x="12" y="4" width="1" height="1" fill="#7c7c7c"/><rect x="13" y="4" width="2" height="1" fill="#aaaaaa"/><rect x="15" y="4" width="1" height="1" fill="#7c7c7c"/><rect x="16" y="4" width="1" height="1" fill="#d4d4d4"/><rect x="2" y="5" width="2" height="1" fill="#7c7c7c"/><rect x="14" y="5" width="1" height="1" fill="#aaaaaa"/><rect x="15" y="5" width="1" height="1" fill="#7c7c7c"/><rect x="16" y="5" width="1" height="1" fill="#aaaaaa"/><rect x="2" y="6" width="2" height="1" fill="#7c7c7c"/><rect x="15" y="6" width="1" height="1" fill="#7c7c7c"/><rect x="16" y="6" width="1" height="1" fill="#aaaaaa"/><rect x="3" y="7" width="1" height="1" fill="#aaaaaa"/><rect x="15" y="7" width="2" height="1" fill="#aaaaaa"/><rect x="15" y="8" width="1" height="1" fill="#aaaaaa"/><rect x="14" y="9" width="2" height="1" fill="#7c7c7c"/><rect x="16" y="9" width="1" height="1" fill="#d4d4d4"/><rect x="14" y="10" width="1" height="1" fill="#7c7c7c"/><rect x="2" y="11" width="2" height="1" fill="#d4d4d4"/><rect x="10" y="11" width="1" height="1" fill="#aaaaaa"/><rect x="13" y="11" width="2" height="1" fill="#aaaaaa"/><rect x="3" y="12" width="2" height="1" fill="#aaaaaa"/><rect x="9" y="12" width="2" height="1" fill="#aaaaaa"/><rect x="14" y="12" width="1" height="1" fill="#d4d4d4"/><rect x="4" y="13" width="3" height="1" fill="#aaaaaa"/><rect x="7" y="13" width="1" height="1" fill="#d4d4d4"/><rect x="10" y="13" width="1" height="1" fill="#d4d4d4"/><rect x="7" y="14" width="1" height="1" fill="#d4d4d4"/></svg>
<svg style="position:absolute;left:43px;top:68px" width="9" height="9"><rect x="0.5" y="0.5" width="8" height="8" fill="#fff" stroke="#000"/><rect x="2" y="4" width="5" height="1" fill="#000"/></svg>
<svg style="position:absolute;left:80px;top:86px" width="9" height="5"><path d="M1.5 0.5 H3.5 L4.5 1.5 V3.5 L3.5 4.5 H1.5 L0.5 3.5 V1.5 Z" fill="#88ee77" stroke="#000"/><rect x="5" y="2" width="4" height="1" fill="#000"/></svg>
<svg style="position:absolute;left:63px;top:84px" width="9" height="9"><rect x="0.5" y="0.5" width="8" height="8" fill="#fff" stroke="#000"/><rect x="2" y="4" width="5" height="1" fill="#000"/><rect x="4" y="2" width="1" height="5" fill="#000"/></svg>
<svg style="position:absolute;left:80px;top:102px" width="9" height="5"><path d="M1.5 0.5 H3.5 L4.5 1.5 V3.5 L3.5 4.5 H1.5 L0.5 3.5 V1.5 Z" fill="#88ee77" stroke="#000"/><rect x="5" y="2" width="4" height="1" fill="#000"/></svg>
<svg style="position:absolute;left:63px;top:100px" width="9" height="9"><rect x="0.5" y="0.5" width="8" height="8" fill="#fff" stroke="#000"/><rect x="2" y="4" width="5" height="1" fill="#000"/><rect x="4" y="2" width="1" height="5" fill="#000"/></svg>
<svg style="position:absolute;left:80px;top:118px" width="9" height="5"><path d="M1.5 0.5 H3.5 L4.5 1.5 V3.5 L3.5 4.5 H1.5 L0.5 3.5 V1.5 Z" fill="#88ee77" stroke="#000"/><rect x="5" y="2" width="4" height="1" fill="#000"/></svg>
<svg style="position:absolute;left:63px;top:116px" width="9" height="9"><rect x="0.5" y="0.5" width="8" height="8" fill="#fff" stroke="#000"/><rect x="2" y="4" width="5" height="1" fill="#000"/><rect x="4" y="2" width="1" height="5" fill="#000"/></svg>
<svg style="position:absolute;left:80px;top:134px" width="9" height="5"><path d="M1.5 0.5 H3.5 L4.5 1.5 V3.5 L3.5 4.5 H1.5 L0.5 3.5 V1.5 Z" fill="#88ee77" stroke="#000"/><rect x="5" y="2" width="4" height="1" fill="#000"/></svg>
<svg style="position:absolute;left:63px;top:132px" width="9" height="9"><rect x="0.5" y="0.5" width="8" height="8" fill="#fff" stroke="#000"/><rect x="2" y="4" width="5" height="1" fill="#000"/><rect x="4" y="2" width="1" height="5" fill="#000"/></svg>
<svg style="position:absolute;left:80px;top:150px" width="9" height="5"><path d="M1.5 0.5 H3.5 L4.5 1.5 V3.5 L3.5 4.5 H1.5 L0.5 3.5 V1.5 Z" fill="#88ee77" stroke="#000"/><rect x="5" y="2" width="4" height="1" fill="#000"/></svg>
<svg style="position:absolute;left:63px;top:148px" width="9" height="9"><rect x="0.5" y="0.5" width="8" height="8" fill="#fff" stroke="#000"/><rect x="2" y="4" width="5" height="1" fill="#000"/><rect x="4" y="2" width="1" height="5" fill="#000"/></svg>
<svg style="position:absolute;left:80px;top:166px" width="9" height="5"><path d="M1.5 0.5 H3.5 L4.5 1.5 V3.5 L3.5 4.5 H1.5 L0.5 3.5 V1.5 Z" fill="#88ee77" stroke="#000"/><rect x="5" y="2" width="4" height="1" fill="#000"/></svg>
<svg style="position:absolute;left:63px;top:164px" width="9" height="9"><rect x="0.5" y="0.5" width="8" height="8" fill="#fff" stroke="#000"/><rect x="2" y="4" width="5" height="1" fill="#000"/><rect x="4" y="2" width="1" height="5" fill="#000"/></svg>
<svg style="position:absolute;left:80px;top:182px" width="9" height="5"><path d="M1.5 0.5 H3.5 L4.5 1.5 V3.5 L3.5 4.5 H1.5 L0.5 3.5 V1.5 Z" fill="#88ee77" stroke="#000"/><rect x="5" y="2" width="4" height="1" fill="#000"/></svg>
<svg style="position:absolute;left:63px;top:180px" width="9" height="9"><rect x="0.5" y="0.5" width="8" height="8" fill="#fff" stroke="#000"/><rect x="2" y="4" width="5" height="1" fill="#000"/><rect x="4" y="2" width="1" height="5" fill="#000"/></svg>
<svg style="position:absolute;left:80px;top:198px" width="9" height="5"><path d="M1.5 0.5 H3.5 L4.5 1.5 V3.5 L3.5 4.5 H1.5 L0.5 3.5 V1.5 Z" fill="#88ee77" stroke="#000"/><rect x="5" y="2" width="4" height="1" fill="#000"/></svg>
<svg style="position:absolute;left:63px;top:196px" width="9" height="9"><rect x="0.5" y="0.5" width="8" height="8" fill="#fff" stroke="#000"/><rect x="2" y="4" width="5" height="1" fill="#000"/><rect x="4" y="2" width="1" height="5" fill="#000"/></svg>
<svg style="position:absolute;left:80px;top:214px" width="9" height="5"><path d="M1.5 0.5 H3.5 L4.5 1.5 V3.5 L3.5 4.5 H1.5 L0.5 3.5 V1.5 Z" fill="#88ee77" stroke="#000"/><rect x="5" y="2" width="4" height="1" fill="#000"/></svg>
<svg style="position:absolute;left:63px;top:212px" width="9" height="9"><rect x="0.5" y="0.5" width="8" height="8" fill="#fff" stroke="#000"/><rect x="2" y="4" width="5" height="1" fill="#000"/><rect x="4" y="2" width="1" height="5" fill="#000"/></svg>
<svg style="position:absolute;left:80px;top:230px" width="9" height="5"><path d="M1.5 0.5 H3.5 L4.5 1.5 V3.5 L3.5 4.5 H1.5 L0.5 3.5 V1.5 Z" fill="#88ee77" stroke="#000"/><rect x="5" y="2" width="4" height="1" fill="#000"/></svg>
<svg style="position:absolute;left:63px;top:228px" width="9" height="9"><rect x="0.5" y="0.5" width="8" height="8" fill="#fff" stroke="#000"/><rect x="2" y="4" width="5" height="1" fill="#000"/><rect x="4" y="2" width="1" height="5" fill="#000"/></svg>
<svg style="position:absolute;left:80px;top:246px" width="9" height="5"><path d="M1.5 0.5 H3.5 L4.5 1.5 V3.5 L3.5 4.5 H1.5 L0.5 3.5 V1.5 Z" fill="#88ee77" stroke="#000"/><rect x="5" y="2" width="4" height="1" fill="#000"/></svg>
<svg style="position:absolute;left:63px;top:244px" width="9" height="9"><rect x="0.5" y="0.5" width="8" height="8" fill="#fff" stroke="#000"/><rect x="2" y="4" width="5" height="1" fill="#000"/><rect x="4" y="2" width="1" height="5" fill="#000"/></svg>
<svg style="position:absolute;left:59px;top:256px" width="18" height="16" shape-rendering="crispEdges"><rect x="7" y="1" width="5" height="1" fill="#d4d4d4"/><rect x="5" y="2" width="2" height="1" fill="#d4d4d4"/><rect x="7" y="2" width="5" height="1" fill="#aaaaaa"/><rect x="12" y="2" width="3" height="1" fill="#d4d4d4"/><rect x="1" y="3" width="2" height="1" fill="#d4d4d4"/><rect x="3" y="3" width="2" height="1" fill="#aaaaaa"/><rect x="5" y="3" width="1" height="1" fill="#7c7c7c"/><rect x="6" y="3" width="1" height="1" fill="#d4d4d4"/><rect x="10" y="3" width="3" height="1" fill="#aaaaaa"/><rect x="13" y="3" width="1" height="1" fill="#7c7c7c"/><rect x="14" y="3" width="1" height="1" fill="#aaaaaa"/><rect x="2" y="4" width="1" height="1" fill="#aaaaaa"/><rect x="3" y="4" width="1" height="1" fill="#7c7c7c"/><rect x="4" y="4" width="1" height="1" fill="#aaaaaa"/><rect x="12" y="4" width="1" height="1" fill="#7c7c7c"/><rect x="13" y="4" width="2" height="1" fill="#aaaaaa"/><rect x="15" y="4" width="1" height="1" fill="#7c7c7c"/><rect x="16" y="4" width="1" height="1" fill="#d4d4d4"/><rect x="2" y="5" width="2" height="1" fill="#7c7c7c"/><rect x="14" y="5" width="1" height="1" fill="#aaaaaa"/><rect x="15" y="5" width="1" height="1" fill="#7c7c7c"/><rect x="16" y="5" width="1" height="1" fill="#aaaaaa"/><rect x="2" y="6" width="2" height="1" fill="#7c7c7c"/><rect x="15" y="6" width="1" height="1" fill="#7c7c7c"/><rect x="16" y="6" width="1" height="1" fill="#aaaaaa"/><rect x="3" y="7" width="1" height="1" fill="#aaaaaa"/><rect x="15" y="7" width="2" height="1" fill="#aaaaaa"/><rect x="15" y="8" width="1" height="1" fill="#aaaaaa"/><rect x="14" y="9" width="2" height="1" fill="#7c7c7c"/><rect x="16" y="9" width="1" height="1" fill="#d4d4d4"/><rect x="14" y="10" width="1" height="1" fill="#7c7c7c"/><rect x="2" y="11" width="2" height="1" fill="#d4d4d4"/><rect x="10" y="11" width="1" height="1" fill="#aaaaaa"/><rect x="13" y="11" width="2" height="1" fill="#aaaaaa"/><rect x="3" y="12" width="2" height="1" fill="#aaaaaa"/><rect x="9" y="12" width="2" height="1" fill="#aaaaaa"/><rect x="14" y="12" width="1" height="1" fill="#d4d4d4"/><rect x="4" y="13" width="3" height="1" fill="#aaaaaa"/><rect x="7" y="13" width="1" height="1" fill="#d4d4d4"/><rect x="10" y="13" width="1" height="1" fill="#d4d4d4"/><rect x="7" y="14" width="1" height="1" fill="#d4d4d4"/></svg>
<svg style="position:absolute;left:43px;top:260px" width="9" height="9"><rect x="0.5" y="0.5" width="8" height="8" fill="#fff" stroke="#000"/><rect x="2" y="4" width="5" height="1" fill="#000"/></svg>
<svg style="position:absolute;left:80px;top:274px" width="16" height="12"><defs><linearGradient id="rg" x1="0" x2="1"><stop offset="0" stop-color="#0d5f70"/><stop offset="0.45" stop-color="#6fb7c2"/><stop offset="1" stop-color="#0b5566"/></linearGradient></defs><path d="M0.5 3.5 C0.5 1 15.5 1 15.5 3.5 V8.5 C15.5 11.5 0.5 11.5 0.5 8.5 Z" fill="url(#rg)"/><ellipse cx="8" cy="3.5" rx="7.5" ry="2.8" fill="#1d7d8d"/><path d="M4 5 L7 3 M9 2.5 L12 1.5 M9 4 L13 5 M3 3 L6 2" stroke="#fff" stroke-width="0.9"/></svg>
<svg style="position:absolute;left:63px;top:276px" width="9" height="9"><rect x="0.5" y="0.5" width="8" height="8" fill="#fff" stroke="#000"/><rect x="2" y="4" width="5" height="1" fill="#000"/><rect x="4" y="2" width="1" height="5" fill="#000"/></svg>
<svg style="position:absolute;left:80px;top:290px" width="16" height="12"><defs><linearGradient id="rg" x1="0" x2="1"><stop offset="0" stop-color="#0d5f70"/><stop offset="0.45" stop-color="#6fb7c2"/><stop offset="1" stop-color="#0b5566"/></linearGradient></defs><path d="M0.5 3.5 C0.5 1 15.5 1 15.5 3.5 V8.5 C15.5 11.5 0.5 11.5 0.5 8.5 Z" fill="url(#rg)"/><ellipse cx="8" cy="3.5" rx="7.5" ry="2.8" fill="#1d7d8d"/><path d="M4 5 L7 3 M9 2.5 L12 1.5 M9 4 L13 5 M3 3 L6 2" stroke="#fff" stroke-width="0.9"/></svg>
<svg style="position:absolute;left:63px;top:292px" width="9" height="9"><rect x="0.5" y="0.5" width="8" height="8" fill="#fff" stroke="#000"/><rect x="2" y="4" width="5" height="1" fill="#000"/><rect x="4" y="2" width="1" height="5" fill="#000"/></svg>
<svg style="position:absolute;left:80px;top:306px" width="16" height="12"><defs><linearGradient id="rg" x1="0" x2="1"><stop offset="0" stop-color="#0d5f70"/><stop offset="0.45" stop-color="#6fb7c2"/><stop offset="1" stop-color="#0b5566"/></linearGradient></defs><path d="M0.5 3.5 C0.5 1 15.5 1 15.5 3.5 V8.5 C15.5 11.5 0.5 11.5 0.5 8.5 Z" fill="url(#rg)"/><ellipse cx="8" cy="3.5" rx="7.5" ry="2.8" fill="#1d7d8d"/><path d="M4 5 L7 3 M9 2.5 L12 1.5 M9 4 L13 5 M3 3 L6 2" stroke="#fff" stroke-width="0.9"/></svg>
<svg style="position:absolute;left:63px;top:308px" width="9" height="9"><rect x="0.5" y="0.5" width="8" height="8" fill="#fff" stroke="#000"/><rect x="2" y="4" width="5" height="1" fill="#000"/><rect x="4" y="2" width="1" height="5" fill="#000"/></svg>
</div>
<div style="left:215px;top:32px;width:771px;height:215px;background:#7a7a7a"></div>
<div style="left:215px;top:32px;width:773px;height:16px;background:#3d3d3d"></div>
<div class="t" style="left:550px;top:33px;font-size:12px;line-height:16px;letter-spacing:0.174px;color:#ffffff;">Rate Limit Policies</div>
<div style="left:215px;top:48px;width:770px;height:2px;background:#5a5a5a"></div>
<div style="left:215px;top:48px;width:2px;height:199px;background:#5a5a5a"></div>
<div style="left:217px;top:50px;width:768px;height:196px;background:#e8e8e8"></div>
<div style="left:216px;top:50px;width:754px;height:16px;overflow:hidden">
<div style="left:1px;top:0px;width:79px;height:15px;background:linear-gradient(#f2f2f2,#ececec 50%,#dedede);box-sizing:border-box;border-right:1px solid #8a8a8a;border-left:1px solid #fff;border-top:1px solid #fff"></div>
<div style="left:0px;top:15px;width:80px;height:1px;background:#7a7a7a"></div>
<div class="t" style="left:3px;top:1px;font-size:12px;line-height:16px;letter-spacing:0.165px;color:#000;width:76px;overflow:hidden;">Policer Name</div>
<div style="left:80px;top:0px;width:53px;height:15px;background:linear-gradient(#f2f2f2,#ececec 50%,#dedede);box-sizing:border-box;border-right:1px solid #8a8a8a;border-left:1px solid #fff;border-top:1px solid #fff"></div>
<div style="left:79px;top:15px;width:54px;height:1px;background:#7a7a7a"></div>
<div class="t" style="left:81px;top:1px;font-size:12px;line-height:16px;letter-spacing:0.035px;color:#000;width:50px;overflow:hidden;">Node N...</div>
<div style="left:133px;top:0px;width:78px;height:15px;background:linear-gradient(#f2f2f2,#ececec 50%,#dedede);box-sizing:border-box;border-right:1px solid #8a8a8a;border-left:1px solid #fff;border-top:1px solid #fff"></div>
<div style="left:132px;top:15px;width:79px;height:1px;background:#7a7a7a"></div>
<div class="t" style="left:140px;top:1px;font-size:12px;line-height:16px;letter-spacing:0.366px;color:#000;">Classifier</div>
<div style="left:211px;top:0px;width:81px;height:15px;background:linear-gradient(#f2f2f2,#ececec 50%,#dedede);box-sizing:border-box;border-right:1px solid #8a8a8a;border-left:1px solid #fff;border-top:1px solid #fff"></div>
<div style="left:210px;top:15px;width:82px;height:1px;background:#7a7a7a"></div>
<div class="t" style="left:212px;top:1px;font-size:12px;line-height:16px;letter-spacing:0.064px;color:#000;width:78px;overflow:hidden;"># of Interfaces</div>
<div style="left:292px;top:0px;width:62px;height:15px;background:linear-gradient(#f2f2f2,#ececec 50%,#dedede);box-sizing:border-box;border-right:1px solid #8a8a8a;border-left:1px solid #fff;border-top:1px solid #fff"></div>
<div style="left:291px;top:15px;width:63px;height:1px;background:#7a7a7a"></div>
<div class="t" style="left:313px;top:1px;font-size:12px;line-height:16px;letter-spacing:0.111px;color:#000;">CIR</div>
<div style="left:354px;top:0px;width:55px;height:15px;background:linear-gradient(#f2f2f2,#ececec 50%,#dedede);box-sizing:border-box;border-right:1px solid #8a8a8a;border-left:1px solid #fff;border-top:1px solid #fff"></div>
<div style="left:353px;top:15px;width:56px;height:1px;background:#7a7a7a"></div>
<div class="t" style="left:373px;top:1px;font-size:12px;line-height:16px;letter-spacing:0.165px;color:#000;">BC</div>
<div style="left:409px;top:0px;width:65px;height:15px;background:linear-gradient(#f2f2f2,#ececec 50%,#dedede);box-sizing:border-box;border-right:1px solid #8a8a8a;border-left:1px solid #fff;border-top:1px solid #fff"></div>
<div style="left:408px;top:15px;width:66px;height:1px;background:#7a7a7a"></div>
<div class="t" style="left:431px;top:1px;font-size:12px;line-height:16px;letter-spacing:-0.001px;color:#000;">PIR</div>
<div style="left:474px;top:0px;width:48px;height:15px;background:linear-gradient(#f2f2f2,#ececec 50%,#dedede);box-sizing:border-box;border-right:1px solid #8a8a8a;border-left:1px solid #fff;border-top:1px solid #fff"></div>
<div style="left:473px;top:15px;width:49px;height:1px;background:#7a7a7a"></div>
<div class="t" style="left:490px;top:1px;font-size:12px;line-height:16px;letter-spacing:-0.004px;color:#000;">BE</div>
<div style="left:522px;top:0px;width:102px;height:15px;background:linear-gradient(#f2f2f2,#ececec 50%,#dedede);box-sizing:border-box;border-right:1px solid #8a8a8a;border-left:1px solid #fff;border-top:1px solid #fff"></div>
<div style="left:521px;top:15px;width:103px;height:1px;background:#7a7a7a"></div>
<div class="t" style="left:524px;top:1px;font-size:12px;line-height:16px;letter-spacing:0.122px;color:#000;width:99px;overflow:hidden;">Conformed Action</div>
<div style="left:624px;top:0px;width:80px;height:15px;background:linear-gradient(#f2f2f2,#ececec 50%,#dedede);box-sizing:border-box;border-right:1px solid #8a8a8a;border-left:1px solid #fff;border-top:1px solid #fff"></div>
<div style="left:623px;top:15px;width:81px;height:1px;background:#7a7a7a"></div>
<div class="t" style="left:626px;top:1px;font-size:12px;line-height:16px;letter-spacing:0.099px;color:#000;width:77px;overflow:hidden;">Exceed Action</div>
<div style="left:704px;top:0px;width:181px;height:15px;background:linear-gradient(#f2f2f2,#ececec 50%,#dedede);box-sizing:border-box;border-right:1px solid #8a8a8a;border-left:1px solid #fff;border-top:1px solid #fff"></div>
<div style="left:703px;top:15px;width:182px;height:1px;background:#7a7a7a"></div>
<div class="t" style="left:706px;top:1px;font-size:12px;line-height:16px;letter-spacing:0.116px;color:#000;width:178px;overflow:hidden;">Violate Action</div>
</div>
<svg style="position:absolute;left:413px;top:56px" width="9" height="6"><polygon points="0,0 8,0 4,4" fill="#000"/></svg>
<div style="left:970px;top:50px;width:15px;height:16px;background:linear-gradient(#f6f6f6,#e0e0e0)"></div>
<div style="left:217px;top:66px;width:753px;height:165px;overflow:hidden;background:#fff">
<div class="t" style="left:1px;top:-5px;font-size:12px;line-height:16px;letter-spacing:0.165px;color:#000;">2m</div>
<div class="t" style="left:80px;top:-5px;font-size:12px;line-height:16px;letter-spacing:-0.085px;color:#000;">WAS36...</div>
<div class="t" style="left:133px;top:-5px;font-size:12px;line-height:16px;letter-spacing:0.280px;color:#000;">class-default</div>
<div class="t" style="left:211px;top:-5px;font-size:12px;line-height:16px;letter-spacing:0.326px;color:#000;">0</div>
<div class="t" style="left:292px;top:-5px;font-size:12px;line-height:16px;letter-spacing:0.326px;color:#000;">2000000</div>
<div class="t" style="left:354px;top:-5px;font-size:12px;line-height:16px;letter-spacing:0.326px;color:#000;">3000</div>
<div class="t" style="left:409px;top:-5px;font-size:12px;line-height:16px;letter-spacing:0.253px;color:#000;">2000000.0</div>
<div class="t" style="left:474px;top:-5px;font-size:12px;line-height:16px;letter-spacing:0.004px;color:#000;">-</div>
<div class="t" style="left:522px;top:-5px;font-size:12px;line-height:16px;letter-spacing:0.166px;color:#000;">transmit</div>
<div class="t" style="left:624px;top:-5px;font-size:12px;line-height:16px;letter-spacing:0.246px;color:#000;">drop</div>
<div style="left:0px;top:10px;width:753px;height:1px;background:#a0a0a0"></div>
<div class="t" style="left:1px;top:11px;font-size:12px;line-height:16px;letter-spacing:0.165px;color:#000;">3m</div>
<div class="t" style="left:80px;top:11px;font-size:12px;line-height:16px;letter-spacing:-0.085px;color:#000;">WAS36...</div>
<div class="t" style="left:133px;top:11px;font-size:12px;line-height:16px;letter-spacing:0.280px;color:#000;">class-default</div>
<div class="t" style="left:211px;top:11px;font-size:12px;line-height:16px;letter-spacing:0.326px;color:#000;">0</div>
<div class="t" style="left:292px;top:11px;font-size:12px;line-height:16px;letter-spacing:0.326px;color:#000;">3000000</div>
<div class="t" style="left:354px;top:11px;font-size:12px;line-height:16px;letter-spacing:0.326px;color:#000;">3000</div>
<div class="t" style="left:409px;top:11px;font-size:12px;line-height:16px;letter-spacing:0.253px;color:#000;">3000000.0</div>
<div class="t" style="left:474px;top:11px;font-size:12px;line-height:16px;letter-spacing:0.004px;color:#000;">-</div>
<div class="t" style="left:522px;top:11px;font-size:12px;line-height:16px;letter-spacing:0.166px;color:#000;">transmit</div>
<div class="t" style="left:624px;top:11px;font-size:12px;line-height:16px;letter-spacing:0.246px;color:#000;">drop</div>
<div style="left:0px;top:26px;width:753px;height:1px;background:#a0a0a0"></div>
<div class="t" style="left:1px;top:27px;font-size:12px;line-height:16px;letter-spacing:0.219px;color:#000;">10m</div>
<div class="t" style="left:80px;top:27px;font-size:12px;line-height:16px;letter-spacing:-0.045px;color:#000;">BEK36...</div>
<div class="t" style="left:133px;top:27px;font-size:12px;line-height:16px;letter-spacing:0.280px;color:#000;">class-default</div>
<div class="t" style="left:211px;top:27px;font-size:12px;line-height:16px;letter-spacing:0.326px;color:#000;">0</div>
<div class="t" style="left:292px;top:27px;font-size:12px;line-height:16px;letter-spacing:0.326px;color:#000;">10000000</div>
<div class="t" style="left:354px;top:27px;font-size:12px;line-height:16px;letter-spacing:0.326px;color:#000;">5000</div>
<div class="t" style="left:409px;top:27px;font-size:12px;line-height:16px;letter-spacing:0.128px;color:#000;">1.0E7</div>
<div class="t" style="left:474px;top:27px;font-size:12px;line-height:16px;letter-spacing:0.004px;color:#000;">-</div>
<div class="t" style="left:522px;top:27px;font-size:12px;line-height:16px;letter-spacing:0.166px;color:#000;">transmit</div>
<div class="t" style="left:624px;top:27px;font-size:12px;line-height:16px;letter-spacing:0.246px;color:#000;">drop</div>
<div style="left:0px;top:42px;width:753px;height:1px;background:#a0a0a0"></div>
<div class="t" style="left:1px;top:43px;font-size:12px;line-height:16px;letter-spacing:0.165px;color:#000;">2m</div>
<div class="t" style="left:80px;top:43px;font-size:12px;line-height:16px;letter-spacing:-0.045px;color:#000;">BEK36...</div>
<div class="t" style="left:133px;top:43px;font-size:12px;line-height:16px;letter-spacing:0.280px;color:#000;">class-default</div>
<div class="t" style="left:211px;top:43px;font-size:12px;line-height:16px;letter-spacing:0.326px;color:#000;">0</div>
<div class="t" style="left:292px;top:43px;font-size:12px;line-height:16px;letter-spacing:0.326px;color:#000;">2000000</div>
<div class="t" style="left:354px;top:43px;font-size:12px;line-height:16px;letter-spacing:0.326px;color:#000;">3000</div>
<div class="t" style="left:409px;top:43px;font-size:12px;line-height:16px;letter-spacing:0.253px;color:#000;">2000000.0</div>
<div class="t" style="left:474px;top:43px;font-size:12px;line-height:16px;letter-spacing:0.004px;color:#000;">-</div>
<div class="t" style="left:522px;top:43px;font-size:12px;line-height:16px;letter-spacing:0.166px;color:#000;">transmit</div>
<div class="t" style="left:624px;top:43px;font-size:12px;line-height:16px;letter-spacing:0.246px;color:#000;">drop</div>
<div style="left:0px;top:58px;width:753px;height:1px;background:#a0a0a0"></div>
<div class="t" style="left:1px;top:59px;font-size:12px;line-height:16px;letter-spacing:0.165px;color:#000;">3m</div>
<div class="t" style="left:80px;top:59px;font-size:12px;line-height:16px;letter-spacing:-0.045px;color:#000;">BEK36...</div>
<div class="t" style="left:133px;top:59px;font-size:12px;line-height:16px;letter-spacing:0.280px;color:#000;">class-default</div>
<div class="t" style="left:211px;top:59px;font-size:12px;line-height:16px;letter-spacing:0.326px;color:#000;">0</div>
<div class="t" style="left:292px;top:59px;font-size:12px;line-height:16px;letter-spacing:0.326px;color:#000;">3000000</div>
<div class="t" style="left:354px;top:59px;font-size:12px;line-height:16px;letter-spacing:0.326px;color:#000;">3000</div>
<div class="t" style="left:409px;top:59px;font-size:12px;line-height:16px;letter-spacing:0.253px;color:#000;">3000000.0</div>
<div class="t" style="left:474px;top:59px;font-size:12px;line-height:16px;letter-spacing:0.004px;color:#000;">-</div>
<div class="t" style="left:522px;top:59px;font-size:12px;line-height:16px;letter-spacing:0.166px;color:#000;">transmit</div>
<div class="t" style="left:624px;top:59px;font-size:12px;line-height:16px;letter-spacing:0.246px;color:#000;">drop</div>
<div style="left:0px;top:74px;width:753px;height:1px;background:#a0a0a0"></div>
<div class="t" style="left:1px;top:75px;font-size:12px;line-height:16px;letter-spacing:0.165px;color:#000;">control-policy</div>
<div class="t" style="left:80px;top:75px;font-size:12px;line-height:16px;letter-spacing:-0.086px;color:#000;">TPE36...</div>
<div class="t" style="left:133px;top:75px;font-size:12px;line-height:16px;letter-spacing:0.405px;color:#000;">class-bgp</div>
<div class="t" style="left:211px;top:75px;font-size:12px;line-height:16px;letter-spacing:0.326px;color:#000;">0</div>
<div class="t" style="left:292px;top:75px;font-size:12px;line-height:16px;letter-spacing:0.326px;color:#000;">4000000</div>
<div class="t" style="left:354px;top:75px;font-size:12px;line-height:16px;letter-spacing:0.326px;color:#000;">125000</div>
<div class="t" style="left:409px;top:75px;font-size:12px;line-height:16px;letter-spacing:0.253px;color:#000;">4000000.0</div>
<div class="t" style="left:474px;top:75px;font-size:12px;line-height:16px;letter-spacing:0.326px;color:#000;">125000</div>
<div class="t" style="left:522px;top:75px;font-size:12px;line-height:16px;letter-spacing:0.166px;color:#000;">transmit</div>
<div class="t" style="left:624px;top:75px;font-size:12px;line-height:16px;letter-spacing:0.246px;color:#000;">drop</div>
<div class="t" style="left:704px;top:75px;font-size:12px;line-height:16px;letter-spacing:0.246px;color:#000;">drop</div>
<div style="left:0px;top:90px;width:753px;height:1px;background:#a0a0a0"></div>
<div class="t" style="left:1px;top:91px;font-size:12px;line-height:16px;letter-spacing:0.165px;color:#000;">control-policy</div>
<div class="t" style="left:80px;top:91px;font-size:12px;line-height:16px;letter-spacing:0.232px;color:#000;">LAX3640</div>
<div class="t" style="left:133px;top:91px;font-size:12px;line-height:16px;letter-spacing:0.405px;color:#000;">class-bgp</div>
<div class="t" style="left:211px;top:91px;font-size:12px;line-height:16px;letter-spacing:0.326px;color:#000;">0</div>
<div class="t" style="left:292px;top:91px;font-size:12px;line-height:16px;letter-spacing:0.326px;color:#000;">4000000</div>
<div class="t" style="left:354px;top:91px;font-size:12px;line-height:16px;letter-spacing:0.326px;color:#000;">125000</div>
<div class="t" style="left:409px;top:91px;font-size:12px;line-height:16px;letter-spacing:0.253px;color:#000;">4000000.0</div>
<div class="t" style="left:474px;top:91px;font-size:12px;line-height:16px;letter-spacing:0.326px;color:#000;">125000</div>
<div class="t" style="left:522px;top:91px;font-size:12px;line-height:16px;letter-spacing:0.166px;color:#000;">transmit</div>
<div class="t" style="left:624px;top:91px;font-size:12px;line-height:16px;letter-spacing:0.246px;color:#000;">drop</div>
<div class="t" style="left:704px;top:91px;font-size:12px;line-height:16px;letter-spacing:0.246px;color:#000;">drop</div>
<div style="left:0px;top:106px;width:753px;height:1px;background:#a0a0a0"></div>
<div class="t" style="left:1px;top:107px;font-size:12px;line-height:16px;letter-spacing:0.165px;color:#000;">control-policy</div>
<div class="t" style="left:80px;top:107px;font-size:12px;line-height:16px;letter-spacing:-0.044px;color:#000;">HKG36...</div>
<div class="t" style="left:133px;top:107px;font-size:12px;line-height:16px;letter-spacing:0.405px;color:#000;">class-bgp</div>
<div class="t" style="left:211px;top:107px;font-size:12px;line-height:16px;letter-spacing:0.326px;color:#000;">0</div>
<div class="t" style="left:292px;top:107px;font-size:12px;line-height:16px;letter-spacing:0.326px;color:#000;">4000000</div>
<div class="t" style="left:354px;top:107px;font-size:12px;line-height:16px;letter-spacing:0.326px;color:#000;">125000</div>
<div class="t" style="left:409px;top:107px;font-size:12px;line-height:16px;letter-spacing:0.253px;color:#000;">4000000.0</div>
<div class="t" style="left:474px;top:107px;font-size:12px;line-height:16px;letter-spacing:0.326px;color:#000;">125000</div>
<div class="t" style="left:522px;top:107px;font-size:12px;line-height:16px;letter-spacing:0.166px;color:#000;">transmit</div>
<div class="t" style="left:624px;top:107px;font-size:12px;line-height:16px;letter-spacing:0.246px;color:#000;">drop</div>
<div class="t" style="left:704px;top:107px;font-size:12px;line-height:16px;letter-spacing:0.246px;color:#000;">drop</div>
<div style="left:0px;top:122px;width:753px;height:1px;background:#a0a0a0"></div>
<div class="t" style="left:1px;top:123px;font-size:12px;line-height:16px;letter-spacing:0.165px;color:#000;">control-policy</div>
<div class="t" style="left:80px;top:123px;font-size:12px;line-height:16px;letter-spacing:-0.045px;color:#000;">BEK36...</div>
<div class="t" style="left:133px;top:123px;font-size:12px;line-height:16px;letter-spacing:0.405px;color:#000;">class-bgp</div>
<div class="t" style="left:211px;top:123px;font-size:12px;line-height:16px;letter-spacing:0.326px;color:#000;">0</div>
<div class="t" style="left:292px;top:123px;font-size:12px;line-height:16px;letter-spacing:0.326px;color:#000;">4000000</div>
<div class="t" style="left:354px;top:123px;font-size:12px;line-height:16px;letter-spacing:0.326px;color:#000;">125000</div>
<div class="t" style="left:409px;top:123px;font-size:12px;line-height:16px;letter-spacing:0.253px;color:#000;">4000000.0</div>
<div class="t" style="left:474px;top:123px;font-size:12px;line-height:16px;letter-spacing:0.326px;color:#000;">125000</div>
<div class="t" style="left:522px;top:123px;font-size:12px;line-height:16px;letter-spacing:0.166px;color:#000;">transmit</div>
<div class="t" style="left:624px;top:123px;font-size:12px;line-height:16px;letter-spacing:0.246px;color:#000;">drop</div>
<div class="t" style="left:704px;top:123px;font-size:12px;line-height:16px;letter-spacing:0.246px;color:#000;">drop</div>
<div style="left:0px;top:138px;width:753px;height:1px;background:#a0a0a0"></div>
<div class="t" style="left:1px;top:139px;font-size:12px;line-height:16px;letter-spacing:0.165px;color:#000;">control-policy</div>
<div class="t" style="left:80px;top:139px;font-size:12px;line-height:16px;letter-spacing:0.232px;color:#000;">LAX3640</div>
<div class="t" style="left:133px;top:139px;font-size:12px;line-height:16px;letter-spacing:0.369px;color:#000;">class-arp</div>
<div class="t" style="left:211px;top:139px;font-size:12px;line-height:16px;letter-spacing:0.326px;color:#000;">0</div>
<div class="t" style="left:292px;top:139px;font-size:12px;line-height:16px;letter-spacing:0.326px;color:#000;">1000000</div>
<div class="t" style="left:354px;top:139px;font-size:12px;line-height:16px;letter-spacing:0.326px;color:#000;">31250</div>
<div class="t" style="left:409px;top:139px;font-size:12px;line-height:16px;letter-spacing:0.253px;color:#000;">1000000.0</div>
<div class="t" style="left:474px;top:139px;font-size:12px;line-height:16px;letter-spacing:0.326px;color:#000;">31250</div>
<div class="t" style="left:522px;top:139px;font-size:12px;line-height:16px;letter-spacing:0.166px;color:#000;">transmit</div>
<div class="t" style="left:624px;top:139px;font-size:12px;line-height:16px;letter-spacing:0.246px;color:#000;">drop</div>
<div class="t" style="left:704px;top:139px;font-size:12px;line-height:16px;letter-spacing:0.246px;color:#000;">drop</div>
<div style="left:0px;top:154px;width:753px;height:1px;background:#a0a0a0"></div>
<div class="t" style="left:1px;top:155px;font-size:12px;line-height:16px;letter-spacing:0.165px;color:#000;">control-policy</div>
<div class="t" style="left:80px;top:155px;font-size:12px;line-height:16px;letter-spacing:-0.044px;color:#000;">HKG36...</div>
<div class="t" style="left:133px;top:155px;font-size:12px;line-height:16px;letter-spacing:0.369px;color:#000;">class-arp</div>
<div class="t" style="left:211px;top:155px;font-size:12px;line-height:16px;letter-spacing:0.326px;color:#000;">0</div>
<div class="t" style="left:292px;top:155px;font-size:12px;line-height:16px;letter-spacing:0.326px;color:#000;">1000000</div>
<div class="t" style="left:354px;top:155px;font-size:12px;line-height:16px;letter-spacing:0.326px;color:#000;">31250</div>
<div class="t" style="left:409px;top:155px;font-size:12px;line-height:16px;letter-spacing:0.253px;color:#000;">1000000.0</div>
<div class="t" style="left:474px;top:155px;font-size:12px;line-height:16px;letter-spacing:0.326px;color:#000;">31250</div>
<div class="t" style="left:522px;top:155px;font-size:12px;line-height:16px;letter-spacing:0.166px;color:#000;">transmit</div>
<div class="t" style="left:624px;top:155px;font-size:12px;line-height:16px;letter-spacing:0.246px;color:#000;">drop</div>
<div class="t" style="left:704px;top:155px;font-size:12px;line-height:16px;letter-spacing:0.246px;color:#000;">drop</div>
<div style="left:0px;top:170px;width:753px;height:1px;background:#a0a0a0"></div>
<div class="t" style="left:1px;top:171px;font-size:12px;line-height:16px;letter-spacing:0.165px;color:#000;">control-policy</div>
<div class="t" style="left:80px;top:171px;font-size:12px;line-height:16px;letter-spacing:-0.044px;color:#000;">HKG36...</div>
<div class="t" style="left:133px;top:171px;font-size:12px;line-height:16px;letter-spacing:0.369px;color:#000;">class-arp</div>
<div class="t" style="left:211px;top:171px;font-size:12px;line-height:16px;letter-spacing:0.326px;color:#000;">0</div>
<div class="t" style="left:292px;top:171px;font-size:12px;line-height:16px;letter-spacing:0.326px;color:#000;">1000000</div>
<div class="t" style="left:354px;top:171px;font-size:12px;line-height:16px;letter-spacing:0.326px;color:#000;">31250</div>
<div class="t" style="left:409px;top:171px;font-size:12px;line-height:16px;letter-spacing:0.253px;color:#000;">1000000.0</div>
<div class="t" style="left:474px;top:171px;font-size:12px;line-height:16px;letter-spacing:0.326px;color:#000;">31250</div>
<div class="t" style="left:522px;top:171px;font-size:12px;line-height:16px;letter-spacing:0.166px;color:#000;">transmit</div>
<div class="t" style="left:624px;top:171px;font-size:12px;line-height:16px;letter-spacing:0.246px;color:#000;">drop</div>
<div class="t" style="left:704px;top:171px;font-size:12px;line-height:16px;letter-spacing:0.246px;color:#000;">drop</div>
<div style="left:0px;top:186px;width:753px;height:1px;background:#a0a0a0"></div>
<div style="left:78px;top:0px;width:1px;height:165px;background:#a0a0a0"></div>
<div style="left:131px;top:0px;width:1px;height:165px;background:#a0a0a0"></div>
<div style="left:209px;top:0px;width:1px;height:165px;background:#a0a0a0"></div>
<div style="left:290px;top:0px;width:1px;height:165px;background:#a0a0a0"></div>
<div style="left:352px;top:0px;width:1px;height:165px;background:#a0a0a0"></div>
<div style="left:407px;top:0px;width:1px;height:165px;background:#a0a0a0"></div>
<div style="left:472px;top:0px;width:1px;height:165px;background:#a0a0a0"></div>
<div style="left:520px;top:0px;width:1px;height:165px;background:#a0a0a0"></div>
<div style="left:622px;top:0px;width:1px;height:165px;background:#a0a0a0"></div>
<div style="left:702px;top:0px;width:1px;height:165px;background:#a0a0a0"></div>
</div>
<div style="left:970px;top:66px;width:1px;height:165px;background:#7a7a7a"></div>
<div style="left:971px;top:66px;width:14px;height:165px;background:#e6e6e6"></div>
<div style="left:971px;top:66px;width:14px;height:15px;background:linear-gradient(90deg,#fbfbfb 0%,#f0f0f0 35%,#dedede 100%)"></div>
<div style="left:971px;top:81px;width:14px;height:1px;background:#8a8a8a"></div>
<svg style="position:absolute;left:974px;top:70px" width="8" height="8"><polygon points="0,5 8,5 4,1" fill="#000"/></svg>
<div style="left:971px;top:216px;width:14px;height:15px;background:linear-gradient(90deg,#fbfbfb 0%,#f0f0f0 35%,#dedede 100%)"></div>
<div style="left:971px;top:215px;width:14px;height:1px;background:#8a8a8a"></div>
<svg style="position:absolute;left:974px;top:221px" width="8" height="8"><polygon points="0,1 8,1 4,5" fill="#000"/></svg>
<div style="left:970px;top:133px;width:1px;height:23px;background:#6f849c"></div>
<div style="left:971px;top:133px;width:14px;height:23px;background:linear-gradient(90deg,#b6cade,#a2b8d0);box-sizing:border-box;border:1px solid #7890ac;border-left:none;box-shadow:inset 1px 1px 0 #d0dcea"></div>
<svg style="position:absolute;left:973px;top:137px" width="10" height="15"><defs><pattern id="p338" x="0" y="0" width="4" height="4" patternUnits="userSpaceOnUse"><rect x="0" y="0" width="1" height="1" fill="#ccdaea"/><rect x="1" y="1" width="1" height="1" fill="#667c96"/><rect x="2" y="2" width="1" height="1" fill="#ccdaea"/><rect x="3" y="3" width="1" height="1" fill="#667c96"/></pattern></defs><rect width="10" height="15" fill="url(#p338)"/></svg>
<div style="left:217px;top:231px;width:753px;height:1px;background:#7a7a7a"></div>
<div style="left:217px;top:232px;width:753px;height:14px;background:#e6e6e6"></div>
<div style="left:217px;top:232px;width:15px;height:14px;background:linear-gradient(#fbfbfb 0%,#f0f0f0 35%,#dedede 100%)"></div>
<svg style="position:absolute;left:221px;top:235px" width="8" height="8"><polygon points="5,0 5,8 1,4" fill="#000"/></svg>
<div style="left:954px;top:232px;width:1px;height:14px;background:#8a8a8a"></div>
<div style="left:955px;top:232px;width:15px;height:14px;background:linear-gradient(#fbfbfb 0%,#f0f0f0 35%,#dedede 100%)"></div>
<svg style="position:absolute;left:960px;top:235px" width="8" height="8"><polygon points="1,0 1,8 5,4" fill="#000"/></svg>
<div style="left:232px;top:232px;width:697px;height:14px;background:linear-gradient(#b6cade,#a2b8d0);box-sizing:border-box;border:1px solid #7890ac;border-top:none;box-shadow:inset 1px 1px 0 #d0dcea"></div>
<svg style="position:absolute;left:236px;top:234px" width="689" height="10"><defs><pattern id="p347" x="0" y="0" width="4" height="4" patternUnits="userSpaceOnUse"><rect x="0" y="0" width="1" height="1" fill="#ccdaea"/><rect x="1" y="1" width="1" height="1" fill="#667c96"/><rect x="2" y="2" width="1" height="1" fill="#ccdaea"/><rect x="3" y="3" width="1" height="1" fill="#667c96"/></pattern></defs><rect width="689" height="10" fill="url(#p347)"/></svg>
<div style="left:970px;top:231px;width:15px;height:15px;background:#e8e8e8"></div>
<div style="left:970px;top:231px;width:1px;height:15px;background:#7a7a7a"></div>
<div style="left:215px;top:246px;width:771px;height:1px;background:#7a7a7a"></div>
<div style="left:986px;top:49px;width:2px;height:199px;background:#fafafa"></div>
<div style="left:215px;top:247px;width:773px;height:1px;background:#fafafa"></div>
<div style="left:205px;top:32px;width:1px;height:329px;background:#fafafa"></div>
<div style="left:6px;top:360px;width:200px;height:1px;background:#fafafa"></div>
<div style="left:215px;top:250px;width:772px;height:1px;background:#7a7a7a"></div>
<div style="left:215px;top:250px;width:1px;height:110px;background:#7a7a7a"></div>
<div style="left:986px;top:250px;width:1px;height:110px;background:#7a7a7a"></div>
<div style="left:215px;top:359px;width:772px;height:1px;background:#7a7a7a"></div>
<div style="left:216px;top:251px;width:770px;height:1px;background:#fafafa"></div>
<div style="left:216px;top:251px;width:1px;height:108px;background:#fafafa"></div>
<div style="left:987px;top:250px;width:1px;height:111px;background:#fafafa"></div>
<div style="left:215px;top:360px;width:773px;height:1px;background:#fafafa"></div>
<div style="left:219px;top:255px;width:72px;height:19px;background:#9d9d9d;border-radius:3px 0 0 0;box-sizing:border-box;border-top:1px solid #e0e0e0;border-left:1px solid #e0e0e0"></div>
<div style="left:291px;top:254px;width:72px;height:22px;background:#e8e8e8;box-sizing:border-box;border-top:1px solid #fff;border-right:1px solid #5a5a5a;border-radius:0 3px 0 0"></div>
<div class="t" style="left:229px;top:258px;font-size:12px;line-height:16px;letter-spacing:0.131px;color:#000;">Interfaces</div>
<div class="t" style="left:304px;top:257px;font-size:12px;line-height:16px;letter-spacing:0.182px;color:#000;">Configlet</div>
<div style="left:218px;top:276px;width:765px;height:1px;background:#7a7a7a"></div>
<div style="left:218px;top:276px;width:1px;height:80px;background:#7a7a7a"></div>
<div style="left:982px;top:276px;width:1px;height:80px;background:#7a7a7a"></div>
<div style="left:218px;top:355px;width:765px;height:1px;background:#7a7a7a"></div>
<div style="left:219px;top:277px;width:763px;height:78px;background:#fff"></div>
<div style="left:218px;top:356px;width:766px;height:1px;background:#fafafa"></div>
<div style="left:983px;top:276px;width:1px;height:81px;background:#fafafa"></div>
<div style="left:219px;top:277px;width:748px;height:78px;overflow:hidden">
<div class="t" style="left:5px;top:6px;font-size:12px;line-height:16px;letter-spacing:0.158px;color:#000;">policy-map control-policy</div>
<div class="t" style="left:8px;top:22px;font-size:12px;line-height:16px;letter-spacing:0.398px;color:#000;">class class-bgp</div>
<div class="t" style="left:11px;top:38px;font-size:12px;line-height:16px;letter-spacing:0.188px;color:#000;">police cir 4000000 bc 125000 be 125000</div>
<div class="t" style="left:17px;top:54px;font-size:12px;line-height:16px;letter-spacing:0.114px;color:#000;">conform-action transmit</div>
<div class="t" style="left:17px;top:70px;font-size:12px;line-height:16px;letter-spacing:0.163px;color:#000;">exceed-action drop</div>
</div>
<div style="left:967px;top:277px;width:1px;height:78px;background:#7a7a7a"></div>
<div style="left:968px;top:277px;width:14px;height:78px;background:#e6e6e6"></div>
<div style="left:968px;top:277px;width:14px;height:15px;background:linear-gradient(90deg,#fbfbfb 0%,#f0f0f0 35%,#dedede 100%)"></div>
<div style="left:968px;top:292px;width:14px;height:1px;background:#8a8a8a"></div>
<svg style="position:absolute;left:971px;top:281px" width="8" height="8"><polygon points="0,5 8,5 4,1" fill="#000"/></svg>
<div style="left:968px;top:340px;width:14px;height:15px;background:linear-gradient(90deg,#fbfbfb 0%,#f0f0f0 35%,#dedede 100%)"></div>
<div style="left:968px;top:339px;width:14px;height:1px;background:#8a8a8a"></div>
<svg style="position:absolute;left:971px;top:345px" width="8" height="8"><polygon points="0,1 8,1 4,5" fill="#000"/></svg>
<div style="left:967px;top:292px;width:1px;height:15px;background:#6f849c"></div>
<div style="left:968px;top:292px;width:14px;height:15px;background:linear-gradient(90deg,#b6cade,#a2b8d0);box-sizing:border-box;border:1px solid #7890ac;border-left:none;box-shadow:inset 1px 1px 0 #d0dcea"></div>
<svg style="position:absolute;left:970px;top:296px" width="10" height="7"><defs><pattern id="p391" x="0" y="0" width="4" height="4" patternUnits="userSpaceOnUse"><rect x="0" y="0" width="1" height="1" fill="#ccdaea"/><rect x="1" y="1" width="1" height="1" fill="#667c96"/><rect x="2" y="2" width="1" height="1" fill="#ccdaea"/><rect x="3" y="3" width="1" height="1" fill="#667c96"/></pattern></defs><rect width="10" height="7" fill="url(#p391)"/></svg>
<div style="left:13px;top:376px;width:13px;height:13px;box-sizing:border-box;border:1px solid #5a5a5a;border-right-color:#fff;border-bottom-color:#fff;box-shadow:inset -1px -1px 0 #5a5a5a, inset 1px 1px 0 #fff;background:#e8e8e8"></div>
<div class="t" style="left:30px;top:375px;font-size:12px;line-height:16px;letter-spacing:0.184px;color:#000;">Show only policies that are used</div>
<div style="left:854px;top:370px;width:66px;height:25px;box-sizing:border-box;border:1px solid #5a5a5a;background:linear-gradient(#f0f0f0 0%,#ececec 40%,#e4e4e4 72%,#d2d2d2 100%);box-shadow:inset 1px 1px 0 #fff, 1px 1px 0 #fff"></div>
<div class="t" style="left:870px;top:376px;font-size:12px;line-height:16px;letter-spacing:0.464px;color:#000;">Close</div>
<div style="left:925px;top:370px;width:59px;height:25px;box-sizing:border-box;border:1px solid #5a5a5a;background:linear-gradient(#f0f0f0 0%,#ececec 40%,#e4e4e4 72%,#d2d2d2 100%);box-shadow:inset 1px 1px 0 #fff, 1px 1px 0 #fff"></div>
<div class="t" style="left:942px;top:376px;font-size:12px;line-height:16px;letter-spacing:0.330px;color:#000;">Help</div></body></html>
